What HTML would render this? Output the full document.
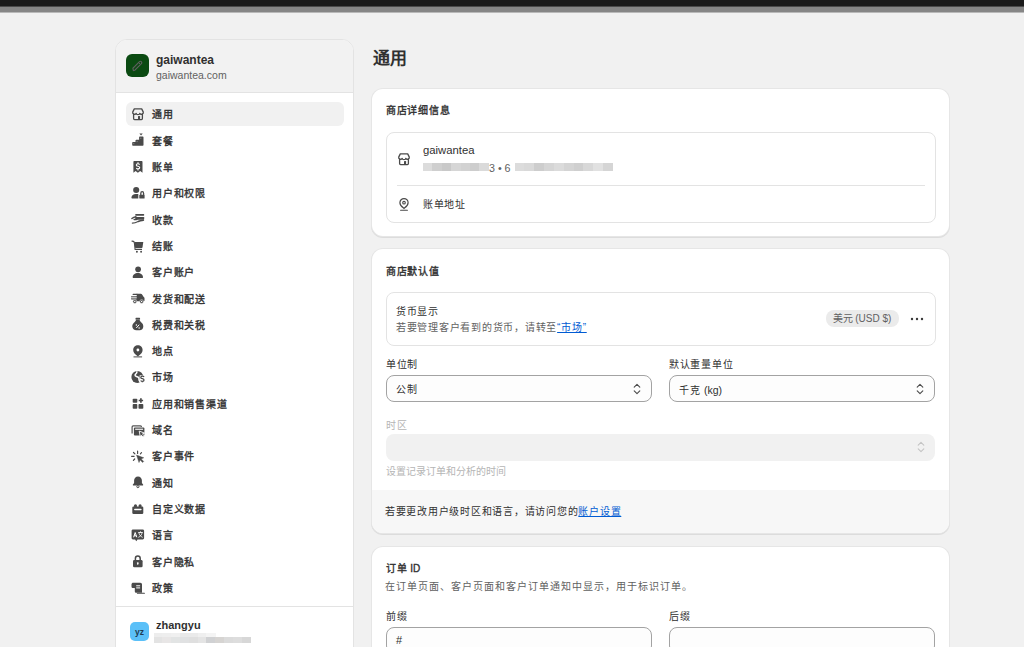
<!DOCTYPE html>
<html lang="zh-CN">
<head>
<meta charset="utf-8">
<style>
*{box-sizing:border-box;margin:0;padding:0}
html,body{width:1024px;height:647px;overflow:hidden}
body{background:#f1f1f1;font-family:"Liberation Sans",sans-serif;color:#303030;position:relative;font-size:10px}
.ttl{font-size:10px;-webkit-text-stroke:0.35px #303030}
.abs{position:absolute}
.t{position:absolute;white-space:nowrap;line-height:1;letter-spacing:0.74px}
.l{letter-spacing:0}
#topbar{position:absolute;left:0;top:0;width:1024px;height:7px;background:linear-gradient(#1a1a1a 0,#1a1a1a 6px,#4a4a4a 6px)}
#topbar2{position:absolute;left:0;top:7px;width:1024px;height:6px;background:linear-gradient(#868686 0,#868686 5px,#b9b9b9 5px)}
#side{position:absolute;left:115px;top:39px;width:239px;height:640px;background:#fff;border:1px solid #e3e3e3;border-radius:12px;overflow:hidden}
#sidehead{position:absolute;left:0;top:0;width:100%;height:53px;background:#f2f2f2;border-bottom:1px solid #e3e3e3}
.nav{position:absolute;left:10px;width:218px;height:24px;border-radius:6px}
.nav.act{background:#f1f1f1}
.nav .ic{position:absolute;left:3.6px;top:4px;width:16px;height:16px}
.nav .lb{position:absolute;left:26px;top:7.4px;-webkit-text-stroke:0.35px #303030;font-size:10px;letter-spacing:0.75px;line-height:12px;font-weight:500;color:#303030;white-space:nowrap}
.card{position:absolute;left:372px;width:576.5px;background:#fff;border-radius:11px;box-shadow:0 0 0 1px #e6e6e6,0 1px 0 1px #dcdcdc}
.box{position:absolute;border:1px solid #e3e3e3;border-radius:8px}
.sel{position:absolute;border:1px solid #a3a3a3;border-radius:8px;background:#fdfdfd;height:27px}
</style>
</head>
<body>
<div id="topbar"></div><div id="topbar2"></div>

<div id="side">
  <div id="sidehead">
    <div class="abs" style="left:10px;top:14px;width:23px;height:23px;background:#0b4a12;border-radius:6px"><svg class="abs" style="left:0;top:0;width:23px;height:23px" viewBox="0 0 23 23"><path d="M7.4 16.6l-.5-2.3 6.6-6.6c.5-.5 1.3-.5 1.8 0l.1.1c.5.5.5 1.3 0 1.8l-6.6 6.6z" fill="none" stroke="#5e5e5e" stroke-width="1.15"/><path d="M12.6 8.6l1.8 1.8" stroke="#5e5e5e" stroke-width="1"/></svg></div>
    <div class="t l" style="left:40px;top:14px;font-size:12px;font-weight:700">gaiwantea</div>
    <div class="t l" style="left:40px;top:30px;font-size:10.5px;color:#616161">gaiwantea.com</div>
  </div>
  <div class="nav act" style="top:62.00px"><svg class="ic" viewBox="0 0 16 16"><path d="M4.3 2.9h7.4l1.6 3.2a1.9 1.9 0 0 1-3.5 1.3a1.9 1.9 0 0 1-3.6 0a1.9 1.9 0 0 1-3.5-1.3z" fill="none" stroke="#4a4a4a" stroke-width="1.3" stroke-linejoin="round"/><path d="M3.6 7.6v5c0 .6.4 1 1 1h6.8c.6 0 1-.4 1-1v-5" fill="none" stroke="#4a4a4a" stroke-width="1.3"/><path d="M8 13.7v-3.2c0-.3.2-.5.5-.5h1.1c.3 0 .5.2.5.5v3.2z" fill="#4a4a4a"/></svg><div class="lb">通用</div></div>
  <div class="nav" style="top:88.31px"><svg class="ic" viewBox="0 0 16 16"><path d="M2.2 13V10.7c0-.4.3-.7.7-.7h2.6V8.5c0-.4.3-.7.7-.7h2.9V5.3c0-.4.3-.7.7-.7h3c.4 0 .7.3.7.7V13c0 .4-.3.7-.7.7H2.9c-.4 0-.7-.3-.7-.7z" fill="#4a4a4a"/><path d="M9.4 1.4h3.3l-1.65 2.1z" fill="#4a4a4a"/><rect x="3.3" y="11" width="1" height="1.2" fill="#8a8a8a"/><rect x="6.6" y="8.9" width="1" height="1.2" fill="#8a8a8a"/><rect x="10.3" y="5.7" width="1" height="1.2" fill="#8a8a8a"/></svg><div class="lb">套餐</div></div>
  <div class="nav" style="top:114.62px"><svg class="ic" viewBox="0 0 16 16"><path d="M3.4 3c0-.6.4-1 1-1h7.1c.6 0 1 .4 1 1v10.7l-2.3-1.6-2.3 1.6-2.3-1.6-2.2 1.6z" fill="#4a4a4a"/><path d="M9.6 5.6c-.3-.5-.9-.8-1.6-.8-1 0-1.7.5-1.7 1.2 0 .9.8 1.1 1.7 1.3.9.2 1.7.5 1.7 1.3 0 .8-.7 1.3-1.7 1.3-.7 0-1.4-.3-1.7-.9M8 3.3v1.5M8 9.9v1.5" fill="none" stroke="#fff" stroke-width="1.1"/></svg><div class="lb">账单</div></div>
  <div class="nav" style="top:140.93px"><svg class="ic" viewBox="0 0 16 16"><circle cx="6.2" cy="5.05" r="3.05" fill="#4a4a4a"/><path d="M1.4 12.8c0-2.3 2-3.8 4.4-3.8h2.5v4.6H2.2c-.4 0-.8-.3-.8-.8z" fill="#4a4a4a"/><rect x="9.3" y="9.8" width="5.3" height="3.8" rx=".7" fill="#4a4a4a"/><path d="M10.8 9.9V8.4c0-.9.6-1.7 1.4-1.7s1.4.8 1.4 1.7v1.5" fill="none" stroke="#4a4a4a" stroke-width="1.3"/></svg><div class="lb">用户和权限</div></div>
  <div class="nav" style="top:167.24px"><svg class="ic" viewBox="0 0 16 16"><rect x="5.2" y="3.1" width="9" height="1.6" rx=".6" fill="#4a4a4a"/><rect x="5.2" y="6" width="9" height="2.7" rx=".6" fill="#4a4a4a"/><path d="M1.9 7.6c1.1-1 2.4-1.7 4-1.9" fill="none" stroke="#4a4a4a" stroke-width="1.4" stroke-linecap="round"/><path d="M4.1 8.5c1 .2 2 .1 2.8-.2" fill="none" stroke="#4a4a4a" stroke-width="1.3" stroke-linecap="round"/><path d="M2.4 12.1c2.3 0 4-.7 5.7-1.6 1-.5 2.7-1 5.4-1.3" fill="none" stroke="#4a4a4a" stroke-width="1.4" stroke-linecap="round"/></svg><div class="lb">收款</div></div>
  <div class="nav" style="top:193.55px"><svg class="ic" viewBox="0 0 16 16"><path d="M2 3.1c1 0 1.8.3 2.2 1" fill="none" stroke="#4a4a4a" stroke-width="1.2" stroke-linecap="round"/><path d="M4.2 4h9.1l-.8 5.3c-.1.5-.5.9-1 .9H5.2z" fill="#4a4a4a"/><path d="M4.3 4.5l.8 7h6.9" fill="none" stroke="#4a4a4a" stroke-width="1.1"/><circle cx="6.9" cy="13.8" r=".95" fill="#4a4a4a"/><circle cx="11.1" cy="13.8" r=".95" fill="#4a4a4a"/></svg><div class="lb">结账</div></div>
  <div class="nav" style="top:219.86px"><svg class="ic" viewBox="0 0 16 16"><circle cx="8.1" cy="5.35" r="2.85" fill="#4a4a4a"/><path d="M2.7 13.2c0-2.3 2.3-4.1 5.15-4.1s5.15 1.8 5.15 4.1c0 .5-.4.9-.9.9H3.6c-.5 0-.9-.4-.9-.9z" fill="#4a4a4a"/></svg><div class="lb">客户账户</div></div>
  <div class="nav" style="top:246.17px"><svg class="ic" viewBox="0 0 16 16"><path d="M6.6 3.8h4.3c.4 0 .8.2 1 .5l1.8 2.7c.5.1.8.6.8 1.1v2.5c0 .4-.3.7-.7.7H3.6V9.5h3z" fill="#4a4a4a"/><path d="M3.2 4.4h3.9M1.6 6.8h5.2M1.6 8.8h5.2" stroke="#4a4a4a" stroke-width="1.3" stroke-linecap="round"/><path d="M1.6 5.6h5.2M1.6 7.8h5.2" stroke="#fff" stroke-width=".5"/><circle cx="4.8" cy="11.6" r="1.9" fill="#4a4a4a" stroke="#fff" stroke-width=".5"/><circle cx="4.8" cy="11.6" r=".75" fill="#fff"/><circle cx="11.6" cy="11.6" r="1.9" fill="#4a4a4a" stroke="#fff" stroke-width=".5"/><circle cx="11.6" cy="11.6" r=".75" fill="#fff"/></svg><div class="lb">发货和配送</div></div>
  <div class="nav" style="top:272.48px"><svg class="ic" viewBox="0 0 16 16"><rect x="5.5" y="1.8" width="4.6" height="1.9" rx=".6" fill="#4a4a4a"/><path d="M6 4h3.6c.3 1.2 1.2 2 2.3 3 1 .9 1.4 2.2 1.4 3.5 0 2.1-1.6 3.8-3.7 3.8H6.4c-2.1 0-4.1-1.5-4.1-3.8 0-1.3.5-2.6 1.4-3.5 1.1-1 2-1.8 2.3-3z" fill="#4a4a4a"/><path d="M6.3 12l2.9-3.3" stroke="#fff" stroke-width="1"/><circle cx="6.4" cy="9" r=".75" fill="#fff"/><circle cx="9.1" cy="11.9" r=".75" fill="#fff"/></svg><div class="lb">税费和关税</div></div>
  <div class="nav" style="top:298.79px"><svg class="ic" viewBox="0 0 16 16"><path d="M7.9 2.2c2.6 0 4.7 2.1 4.7 4.7 0 2.3-1.7 4.1-3.9 5.9l-.8.6-.8-.6C4.9 11 3.2 9.2 3.2 6.9c0-2.6 2.1-4.7 4.7-4.7z" fill="#4a4a4a"/><circle cx="7.9" cy="7" r="1.4" fill="#fff"/><path d="M3.9 13.9h7.8" stroke="#4a4a4a" stroke-width="1" stroke-linecap="round"/></svg><div class="lb">地点</div></div>
  <div class="nav" style="top:325.10px"><svg class="ic" viewBox="0 0 16 16"><circle cx="7.3" cy="8.05" r="5.95" fill="#4a4a4a"/><path d="M6.8 2.3c.4 1.3-.2 2.3-1.2 2.9-.7.5-.6 1.5.2 2 1 .6 2.3.5 2.9 1.5.5.8.1 1.9.6 3 .3.6.8 1 1.4 1.3" fill="none" stroke="#fff" stroke-width="1.5"/><path d="M9.6 6.3h6.4v8.8H9.6z" fill="#fff"/><path d="M14 8c-.3-.6-.9-.9-1.6-.9-.9 0-1.6.5-1.6 1.3 0 .8.7 1.1 1.6 1.3.9.2 1.6.6 1.6 1.4 0 .8-.7 1.3-1.6 1.3-.7 0-1.3-.3-1.7-.9M12.4 6.4v.8M12.4 12.3v.9" fill="none" stroke="#4a4a4a" stroke-width="1.3"/></svg><div class="lb">市场</div></div>
  <div class="nav" style="top:351.41px"><svg class="ic" viewBox="0 0 16 16"><rect x="2.7" y="3.8" width="4.6" height="3.9" rx=".8" fill="#4a4a4a"/><rect x="2.7" y="9.1" width="4.6" height="4.6" rx=".8" fill="#4a4a4a"/><rect x="8.5" y="9.1" width="4.8" height="4.6" rx=".8" fill="#4a4a4a"/><path d="M10.9 3.3v4.4M8.7 5.5h4.4" stroke="#4a4a4a" stroke-width="1.7"/></svg><div class="lb">应用和销售渠道</div></div>
  <div class="nav" style="top:377.72px"><svg class="ic" viewBox="0 0 16 16"><path d="M2.1 11.5V4.9c0-.6.4-1 1-1h7.4c.6 0 1 .4 1 1" fill="none" stroke="#555" stroke-width="1.2"/><rect x="3.9" y="5.4" width="10.5" height="8.1" rx="1" fill="#4a4a4a"/><rect x="5.2" y="6.7" width="7.9" height="1.1" fill="#fff"/><path d="M9.2 9.1l5.4 2-2.2.9 1.9 1.9-1.1 1.1-1.9-1.9-.9 2.2z" fill="#4a4a4a" stroke="#fff" stroke-width=".9" stroke-linejoin="round"/></svg><div class="lb">域名</div></div>
  <div class="nav" style="top:404.03px"><svg class="ic" viewBox="0 0 16 16"><path d="M6.5 7l7.3 2.8-2.6 1.1 2.5 2.5-1.1 1.1-2.5-2.5-1.1 2.6z" fill="#4a4a4a" stroke="#4a4a4a" stroke-width=".4" stroke-linejoin="round"/><path d="M7.6 3.2v2.2M1.6 8.3h2.5M3.5 4.5l1.4 1.4M11.5 4.7l-1.1 1.1M3.4 12.3l1.3-1.3" stroke="#4a4a4a" stroke-width="1.2" stroke-linecap="round"/></svg><div class="lb">客户事件</div></div>
  <div class="nav" style="top:430.34px"><svg class="ic" viewBox="0 0 16 16"><path d="M8 2.6c2.3 0 3.9 1.8 3.9 4v2.3l1.2 1.6c.3.5 0 1-.6 1H3.5c-.6 0-.9-.5-.6-1l1.2-1.6V6.6c0-2.2 1.6-4 3.9-4z" fill="#4a4a4a"/><circle cx="7.9" cy="12.6" r="1.1" fill="#fff" stroke="#4a4a4a" stroke-width="1"/></svg><div class="lb">通知</div></div>
  <div class="nav" style="top:456.65px"><svg class="ic" viewBox="0 0 16 16"><circle cx="5.5" cy="4.9" r="1.6" fill="#4a4a4a"/><circle cx="10.1" cy="4.9" r="1.6" fill="#4a4a4a"/><rect x="2.3" y="5.5" width="11" height="7.5" rx="1.2" fill="#4a4a4a"/><rect x="4.1" y="7.7" width="7.5" height="1.5" rx=".7" fill="#fff"/></svg><div class="lb">自定义数据</div></div>
  <div class="nav" style="top:482.96px"><svg class="ic" viewBox="0 0 16 16"><path d="M3 2.4h9.7c.8 0 1.4.6 1.4 1.4v7.2c0 .8-.6 1.4-1.4 1.4H7.5l-1.2 1.8-1.2-1.8H3c-.8 0-1.4-.6-1.4-1.4V3.8c0-.8.6-1.4 1.4-1.4z" fill="#4a4a4a"/><path d="M3.6 10.3l1.6-4.8 1.6 4.8M4.1 8.8h2.2" fill="none" stroke="#fff" stroke-width="1"/><path d="M8.2 5.5h4.6M10.5 4.4v1.1M9 6.2c.5 1.9 1.8 3.3 3.6 4.1M12 6.2c-.5 1.9-1.8 3.3-3.6 4.1" fill="none" stroke="#fff" stroke-width=".9"/></svg><div class="lb">语言</div></div>
  <div class="nav" style="top:509.27px"><svg class="ic" viewBox="0 0 16 16"><path d="M5.4 7.4V5.6c0-1.4 1.1-2.5 2.4-2.5s2.4 1.1 2.4 2.5v1.8" fill="none" stroke="#4a4a4a" stroke-width="1.5"/><rect x="3" y="7" width="9.6" height="7.3" rx="1.3" fill="#4a4a4a"/><circle cx="7.8" cy="10.1" r=".95" fill="#fff"/><rect x="7.4" y="10" width=".8" height="2" fill="#fff"/></svg><div class="lb">客户隐私</div></div>
  <div class="nav" style="top:535.58px"><svg class="ic" viewBox="0 0 16 16"><path d="M3.2 2.7h7.1c1 0 1.7.8 1.7 1.7v8.4H6.4c-.9 0-1.6-.7-1.6-1.6V8.1H3.2c-1 0-1.7-.8-1.7-1.7V4.4c0-1 .8-1.7 1.7-1.7z" fill="#4a4a4a"/><rect x="6.2" y="5.3" width="3.9" height="1" fill="#fff"/><rect x="6.2" y="7.4" width="3.9" height="1" fill="#fff"/><path d="M7.4 13.2h7" stroke="#4a4a4a" stroke-width="1.1" stroke-linecap="round"/></svg><div class="lb">政策</div></div>
  <div class="abs" style="left:0;top:566px;width:100%;height:1px;background:#e3e3e3"></div>
  <div class="abs" style="left:14px;top:582px;width:19px;height:19px;background:#5bc0f8;border-radius:5px"><div class="t" style="left:0;width:19px;text-align:center;top:6px;font-size:8.5px;font-weight:700;color:#1f3a4f;letter-spacing:0">yz</div></div>
  <div class="abs" style="left:37.5px;top:592.5px;width:9.4px;height:4.3px;background:#ededed"></div><div class="abs" style="left:46.3px;top:592.5px;width:9.4px;height:4.3px;background:#eeeeee"></div><div class="abs" style="left:55.1px;top:592.5px;width:9.4px;height:4.3px;background:#f0f0f0"></div><div class="abs" style="left:63.9px;top:592.5px;width:9.4px;height:4.3px;background:#e9e9e9"></div><div class="abs" style="left:72.7px;top:592.5px;width:9.4px;height:4.3px;background:#eaeaea"></div><div class="abs" style="left:81.5px;top:592.5px;width:9.4px;height:4.3px;background:#efefef"></div><div class="abs" style="left:90.3px;top:592.5px;width:9.4px;height:4.3px;background:#f4f4f4"></div><div class="abs" style="left:37.5px;top:596.8px;width:9.4px;height:6px;background:#e3e3e3"></div><div class="abs" style="left:46.3px;top:596.8px;width:9.4px;height:6px;background:#e8e6e6"></div><div class="abs" style="left:55.1px;top:596.8px;width:9.4px;height:6px;background:#e2e4e4"></div><div class="abs" style="left:63.9px;top:596.8px;width:9.4px;height:6px;background:#e0e1e2"></div><div class="abs" style="left:72.7px;top:596.8px;width:9.4px;height:6px;background:#dfdfdf"></div><div class="abs" style="left:81.5px;top:596.8px;width:9.4px;height:6px;background:#e4e4e4"></div><div class="abs" style="left:90.3px;top:596.8px;width:9.4px;height:6px;background:#d0d1d3"></div><div class="abs" style="left:99.1px;top:596.8px;width:9.4px;height:6px;background:#d6d4d2"></div><div class="abs" style="left:107.9px;top:596.8px;width:9.4px;height:6px;background:#dbdbdb"></div><div class="abs" style="left:116.7px;top:596.8px;width:9.4px;height:6px;background:#dddddd"></div><div class="abs" style="left:125.5px;top:596.8px;width:9.4px;height:6px;background:#d7d7d7"></div><div class="t l" style="left:40px;top:580px;font-size:11px;font-weight:700">zhangyu</div>
</div>

<div class="t l" style="left:373px;top:50px;font-size:17px;font-weight:700">通用</div>

<div class="card" style="top:89px;height:146.5px">
  <div class="t ttl" style="left:14px;top:17px">商店详细信息</div>
  <div class="box" style="left:14px;top:43px;width:550px;height:91px">
    <svg class="abs" style="left:9px;top:18px;width:16px;height:16px" viewBox="0 0 16 16"><path d="M4.3 2.9h7.4l1.6 3.2a1.9 1.9 0 0 1-3.5 1.3a1.9 1.9 0 0 1-3.6 0a1.9 1.9 0 0 1-3.5-1.3z" fill="none" stroke="#4a4a4a" stroke-width="1.3" stroke-linejoin="round"/><path d="M3.6 7.6v5c0 .6.4 1 1 1h6.8c.6 0 1-.4 1-1v-5" fill="none" stroke="#4a4a4a" stroke-width="1.3"/><path d="M8 13.7v-3.2c0-.3.2-.5.5-.5h1.1c.3 0 .5.2.5.5v3.2z" fill="#4a4a4a"/></svg>
    <div class="t l" style="left:36px;top:12px;font-size:11.3px">gaiwantea</div>
    <div class="abs" style="left:36px;top:30px;width:9.4px;height:8px;background:#dcdcdc"></div><div class="abs" style="left:45.4px;top:30px;width:9.4px;height:8px;background:#cfcfcf"></div><div class="abs" style="left:54.8px;top:30px;width:9.4px;height:8px;background:#c9c9c9"></div><div class="abs" style="left:64.2px;top:30px;width:9.4px;height:8px;background:#d6d6d6"></div><div class="abs" style="left:73.60000000000001px;top:30px;width:9.4px;height:8px;background:#d2d2d2"></div><div class="abs" style="left:83.00000000000001px;top:30px;width:9.4px;height:8px;background:#cdcdcd"></div><div class="abs" style="left:92.40000000000002px;top:30px;width:9.4px;height:8px;background:#dadada"></div><div class="t" style="left:102px;top:30px;font-size:10.7px;color:#616161;letter-spacing:0">3 • 6</div><div class="abs" style="left:127.50px;top:30px;width:10px;height:8px;background:#dcdcdc"></div><div class="abs" style="left:137.35px;top:30px;width:10px;height:8px;background:#d9d9d9"></div><div class="abs" style="left:147.20px;top:30px;width:10px;height:8px;background:#cdcdcd"></div><div class="abs" style="left:157.05px;top:30px;width:10px;height:8px;background:#d5d5d5"></div><div class="abs" style="left:166.90px;top:30px;width:10px;height:8px;background:#dbdbdb"></div><div class="abs" style="left:176.75px;top:30px;width:10px;height:8px;background:#d4d4d4"></div><div class="abs" style="left:186.60px;top:30px;width:10px;height:8px;background:#cfcfcf"></div><div class="abs" style="left:196.45px;top:30px;width:10px;height:8px;background:#d8d8d8"></div><div class="abs" style="left:206.30px;top:30px;width:10px;height:8px;background:#e1e1e1"></div><div class="abs" style="left:216.15px;top:30px;width:10px;height:8px;background:#d5d5d5"></div>
    <div class="abs" style="left:10px;top:52px;width:528px;height:1px;background:#e3e3e3"></div>
    <svg class="abs" style="left:9px;top:62.5px;width:16px;height:16px" viewBox="0 0 16 16"><path d="M8 2.6c2.3 0 4.1 1.8 4.1 4.1 0 2.2-1.7 3.9-3.7 5.3L8 12.4l-.4-.4C5.6 10.6 3.9 8.9 3.9 6.7c0-2.3 1.8-4.1 4.1-4.1z" fill="none" stroke="#4a4a4a" stroke-width="1.2"/><circle cx="8" cy="6.7" r="1.3" fill="none" stroke="#4a4a4a" stroke-width="1.1"/><path d="M4.6 14.2h6.8" stroke="#4a4a4a" stroke-width="1.1" stroke-linecap="round"/></svg>
    <div class="t" style="left:36px;top:67px">账单地址</div>
  </div>
</div>

<div class="card" style="top:249px;height:284px;overflow:hidden">
  <div class="t ttl" style="left:14px;top:17.5px">商店默认值</div>
  <div class="box" style="left:14px;top:43px;width:550px;height:54px">
    <div class="t" style="left:9px;top:14px">货币显示</div>
    <div class="t" style="left:9px;top:30px;color:#616161">若要管理客户看到的货币，请转至<span style="color:#005bd3;text-decoration:underline">“市场”</span></div>
    <div class="abs" style="left:439px;top:17px;width:73px;height:17px;background:#ebebeb;border-radius:8px"><div class="t" style="left:6.5px;top:4px;font-size:10px;color:#616161;letter-spacing:0">美元 (USD $)</div></div>
    <svg class="abs" style="left:523px;top:24px;width:14px;height:4px" viewBox="0 0 14 4"><circle cx="2" cy="2" r="1.2" fill="#3a3a3a"/><circle cx="7" cy="2" r="1.2" fill="#3a3a3a"/><circle cx="12" cy="2" r="1.2" fill="#3a3a3a"/></svg>
  </div>
  <div class="t" style="left:14px;top:111px">单位制</div>
  <div class="t" style="left:297px;top:111px">默认重量单位</div>
  <div class="sel" style="left:14px;top:126px;width:266px"><div class="t" style="left:9px;top:9px">公制</div><svg class="abs" style="right:10px;top:7px;width:8px;height:12px" viewBox="0 0 8 12"><path d="M1.2 4.2L4 1.4l2.8 2.8M1.2 7.8L4 10.6l2.8-2.8" fill="none" stroke="#4a4a4a" stroke-width="1.1" stroke-linecap="round" stroke-linejoin="round"/></svg></div>
  <div class="sel" style="left:297px;top:126px;width:266px"><div class="t" style="left:9px;top:8.5px">千克 <span style="letter-spacing:0;font-size:10.5px">(kg)</span></div><svg class="abs" style="right:10px;top:7px;width:8px;height:12px" viewBox="0 0 8 12"><path d="M1.2 4.2L4 1.4l2.8 2.8M1.2 7.8L4 10.6l2.8-2.8" fill="none" stroke="#4a4a4a" stroke-width="1.1" stroke-linecap="round" stroke-linejoin="round"/></svg></div>
  <div class="t" style="left:14px;top:171.5px;color:#b5b5b5">时区</div>
  <div class="abs" style="left:14px;top:185px;width:549px;height:27px;background:#f1f1f1;border-radius:8px"><svg class="abs" style="right:10px;top:7px;width:8px;height:12px" viewBox="0 0 8 12"><path d="M1.2 4.2L4 1.4l2.8 2.8M1.2 7.8L4 10.6l2.8-2.8" fill="none" stroke="#c4c4c4" stroke-width="1.1" stroke-linecap="round" stroke-linejoin="round"/></svg></div>
  <div class="t l" style="left:14px;top:218px;font-size:10px;color:#b5b5b5">设置记录订单和分析的时间</div>
  <div class="abs" style="left:0;top:241px;width:576.5px;height:43px;background:#f7f7f7">
    <div class="t" style="left:13px;top:17px;">若要更改用户级时区和语言，请访问您的<span style="color:#005bd3;text-decoration:underline">账户设置</span></div>
  </div>
</div>

<div class="card" style="top:547px;height:140px">
  <div class="t ttl" style="left:14px;top:16.5px">订单<span style="letter-spacing:0"> ID</span></div>
  <div class="t" style="left:13px;top:34.5px;color:#616161;letter-spacing:1px">在订单页面、客户页面和客户订单通知中显示，用于标识订单。</div>
  <div class="t" style="left:14px;top:64.5px">前缀</div>
  <div class="t" style="left:297px;top:64.5px">后缀</div>
  <div class="sel" style="left:14px;top:80px;width:266px"><div class="t l" style="left:9px;top:7px;font-size:11px">#</div></div>
  <div class="sel" style="left:297px;top:80px;width:266px"></div>
</div>
</body>
</html>
